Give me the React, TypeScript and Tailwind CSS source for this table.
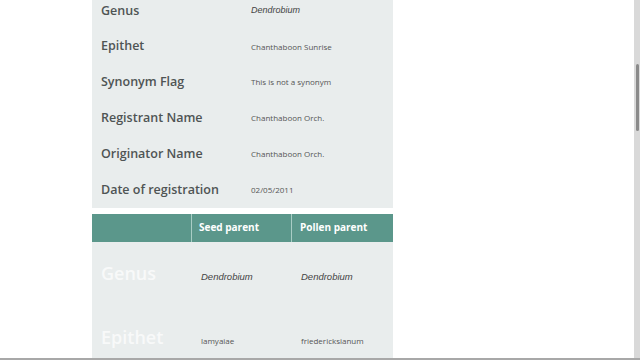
const DETAILS = [
  { label: "Genus", value: "Dendrobium", italic: true },
  { label: "Epithet", value: "Chanthaboon Sunrise" },
  { label: "Synonym Flag", value: "This is not a synonym" },
  { label: "Registrant Name", value: "Chanthaboon Orch." },
  { label: "Originator Name", value: "Chanthaboon Orch." },
  { label: "Date of registration", value: "02/05/2011" },
];

const PARENTS = [
  { label: "Genus", seed: "Dendrobium", pollen: "Dendrobium", italic: true },
  { label: "Epithet", seed: "lamyaiae", pollen: "friedericksianum" },
];

const sans = "font-['Open_Sans','Liberation_Sans',sans-serif]";

export default function App() {
  return (
    <div className="relative h-[360px] w-[640px] overflow-hidden bg-white">
      <div className="ml-[92px] w-[301px]">
        {/* Registration details */}
        <div className="-mt-[7px] bg-[#e9eded]">
          {DETAILS.map((d) => (
            <div key={d.label} className="flex h-[35.8px] items-center">
              <div className={`w-[159px] pl-[9px] text-[12.5px] font-semibold text-[#4f5454] ${sans}`}>{d.label}</div>
              <div
                className={
                  d.italic
                    ? "text-[9px] italic text-[#444] font-['Liberation_Sans',sans-serif]"
                    : `text-[8px] text-[#555] ${sans}`
                }
              >
                {d.value}
              </div>
            </div>
          ))}
        </div>

        {/* Parentage */}
        <div className="mt-[6px] bg-[#e9eded]">
          <div className={`flex h-[28px] bg-[#5b978b] text-[10px] font-bold text-white ${sans}`}>
            <div className="w-[100px] border-r border-[#a9cdc5]" />
            <div className="flex w-[100px] items-center border-r border-[#a9cdc5] pl-[7px]">Seed parent</div>
            <div className="flex flex-1 items-center pl-[8px]">Pollen parent</div>
          </div>
          <div className="pt-[3px]">
            {PARENTS.map((p) => (
              <div key={p.label} className="flex h-[64px] items-center">
                <div className={`w-[100px] pl-[9px] pb-[6px] text-[18px] font-semibold text-white/70 ${sans}`}>{p.label}</div>
                <div
                  className={
                    p.italic
                      ? "w-[100px] pl-[9px] text-[9.5px] italic text-[#444] font-['Liberation_Sans',sans-serif]"
                      : `w-[100px] pl-[9px] text-[8px] text-[#555] ${sans}`
                  }
                >
                  {p.seed}
                </div>
                <div
                  className={
                    p.italic
                      ? "flex-1 pl-[9px] text-[9.5px] italic text-[#444] font-['Liberation_Sans',sans-serif]"
                      : `flex-1 pl-[9px] text-[8px] text-[#555] ${sans}`
                  }
                >
                  {p.pollen}
                </div>
              </div>
            ))}
          </div>
        </div>
      </div>

      {/* scrollbar */}
      <div className="absolute right-0 top-0 h-[360px] w-[6px] bg-[#d9d9d9]">
        <div className="ml-[2px] mt-[64px] h-[67px] w-[3px] rounded-sm bg-[#8a8a8a]" />
      </div>
      <div className="absolute bottom-0 left-0 h-[2px] w-[640px] bg-[#a8a8a8]" />
    </div>
  );
}
